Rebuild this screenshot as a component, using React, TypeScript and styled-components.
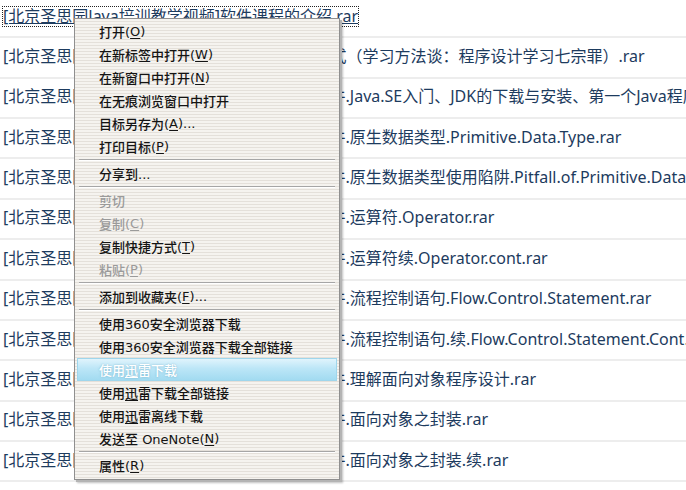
import React from 'react';
import styled, { createGlobalStyle } from 'styled-components';

const GlobalStyle = createGlobalStyle`
    html, body {
        margin: 0;
        padding: 0;
        background: #ffffff;
        overflow: hidden;
    }
    body {
        width: 686px;
        height: 490px;
    }
`;

const prefix = '[北京圣思园Java培训教学视频]';
const lesson = prefix + 'Java.SE6基础课件';

const files = [
    prefix + '软件课程的介绍.rar',
    prefix + 'Java学习正确方式（学习方法谈：程序设计学习七宗罪）.rar',
    lesson + '.Java.SE入门、JDK的下载与安装、第一个Java程序.rar',
    lesson + '.原生数据类型.Primitive.Data.Type.rar',
    lesson + '.原生数据类型使用陷阱.Pitfall.of.Primitive.Data.Type.rar',
    lesson + '.运算符.Operator.rar',
    lesson + '.运算符续.Operator.cont.rar',
    lesson + '.流程控制语句.Flow.Control.Statement.rar',
    lesson + '.流程控制语句.续.Flow.Control.Statement.Cont.rar',
    lesson + '.理解面向对象程序设计.rar',
    lesson + '.面向对象之封装.rar',
    lesson + '.面向对象之封装.续.rar',
];

type MenuEntry =
    | { kind: 'sep' }
    | { kind: 'item'; before: string; key?: string; after?: string; disabled?: boolean; active?: boolean };

const menu: MenuEntry[] = [
    { kind: 'item', before: '打开(', key: 'O', after: ')' },
    { kind: 'item', before: '在新标签中打开(', key: 'W', after: ')' },
    { kind: 'item', before: '在新窗口中打开(', key: 'N', after: ')' },
    { kind: 'item', before: '在无痕浏览窗口中打开' },
    { kind: 'item', before: '目标另存为(', key: 'A', after: ')...' },
    { kind: 'item', before: '打印目标(', key: 'P', after: ')' },
    { kind: 'sep' },
    { kind: 'item', before: '分享到...' },
    { kind: 'sep' },
    { kind: 'item', before: '剪切', disabled: true },
    { kind: 'item', before: '复制(', key: 'C', after: ')', disabled: true },
    { kind: 'item', before: '复制快捷方式(', key: 'T', after: ')' },
    { kind: 'item', before: '粘贴(', key: 'P', after: ')', disabled: true },
    { kind: 'sep' },
    { kind: 'item', before: '添加到收藏夹(', key: 'F', after: ')...' },
    { kind: 'sep' },
    { kind: 'item', before: '使用360安全浏览器下载' },
    { kind: 'item', before: '使用360安全浏览器下载全部链接' },
    { kind: 'item', before: '使用', key: '迅', after: '雷下载', active: true },
    { kind: 'item', before: '使用', key: '迅', after: '雷下载全部链接' },
    { kind: 'item', before: '使用', key: '迅', after: '雷离线下载' },
    { kind: 'item', before: '发送至 OneNote(', key: 'N', after: ')' },
    { kind: 'sep' },
    { kind: 'item', before: '属性(', key: 'R', after: ')' },
];

const Page = styled.div`
    position: relative;
    width: 686px;
    height: 490px;
    overflow: hidden;
    background: #ffffff;
`;

const FileList = styled.ul`
    list-style: none;
    margin: -2px 0 0 0;
    padding: 0;
`;

const FileRow = styled.li`
    box-sizing: border-box;
    height: 40.36px;
    display: flex;
    align-items: center;
    padding: 0 0 2px 3px;
    border-bottom: 2px solid #ededed;
    white-space: nowrap;
`;

const FileLink = styled.a<{ $focused?: boolean }>`
    font-family: 'Noto Sans', 'Noto Sans CJK SC', sans-serif;
    font-size: 16px;
    line-height: 19px;
    color: #1d3b5e;
    text-decoration: ${({ $focused }) => ($focused ? 'underline' : 'none')};
    outline: ${({ $focused }) => ($focused ? '1px dotted #222' : 'none')};
`;

const Menu = styled.div`
    position: absolute;
    left: 74px;
    top: 18px;
    width: 266px;
    box-sizing: border-box;
    padding: 1px 1px 2px;
    border: 1px solid #8f8f8f;
    background: repeating-linear-gradient(
        to bottom,
        #f5f3ef 0px,
        #f5f3ef 2px,
        #e4e0da 2px,
        #e4e0da 3px
    );
    box-shadow: 2px 2px 0 #b4b4b4, 3px 3px 2px rgba(0, 0, 0, 0.25);
    font-family: 'DejaVu Sans', 'Noto Sans CJK SC', sans-serif;
    font-size: 13px;
    font-weight: 500;
`;

const MenuItem = styled.div<{ $disabled?: boolean; $active?: boolean }>`
    height: 23px;
    display: flex;
    align-items: center;
    padding-left: 21px;
    margin: 0 1px;
    box-sizing: border-box;
    color: ${({ $disabled, $active }) => ($active ? '#ffffff' : $disabled ? '#9a9a9a' : '#141414')};
    border: 1px solid ${({ $active }) => ($active ? '#9fd6ec' : 'transparent')};
    background: ${({ $active }) =>
        $active ? 'linear-gradient(to bottom, #e0f4fc 0%, #bce6f7 45%, #a2dbf1 100%)' : 'transparent'};
    text-shadow: ${({ $active }) => ($active ? '0 0 2px rgba(80, 150, 180, 0.6)' : 'none')};
    white-space: nowrap;
`;

const Mnemonic = styled.span`
    text-decoration: underline;
    text-underline-offset: 2px;
`;

const Separator = styled.div`
    height: 4px;
    margin: 0 3px;
    display: flex;
    flex-direction: column;
    justify-content: center;

    &::before {
        content: '';
        height: 1px;
        background: #a6a6a6;
    }
    &::after {
        content: '';
        height: 1px;
        background: #ffffff;
    }
`;

export default function App() {
    return (
        <Page>
            <GlobalStyle />
            <FileList>
                {files.map((f, i) => (
                    <FileRow key={i}>
                        <FileLink $focused={i === 0}>{f}</FileLink>
                    </FileRow>
                ))}
            </FileList>
            <Menu>
                {menu.map((m, i) =>
                    m.kind === 'sep' ? (
                        <Separator key={i} />
                    ) : (
                        <MenuItem key={i} $disabled={m.disabled} $active={m.active}>
                            {m.before}
                            {m.key && <Mnemonic>{m.key}</Mnemonic>}
                            {m.after}
                        </MenuItem>
                    )
                )}
            </Menu>
        </Page>
    );
}
